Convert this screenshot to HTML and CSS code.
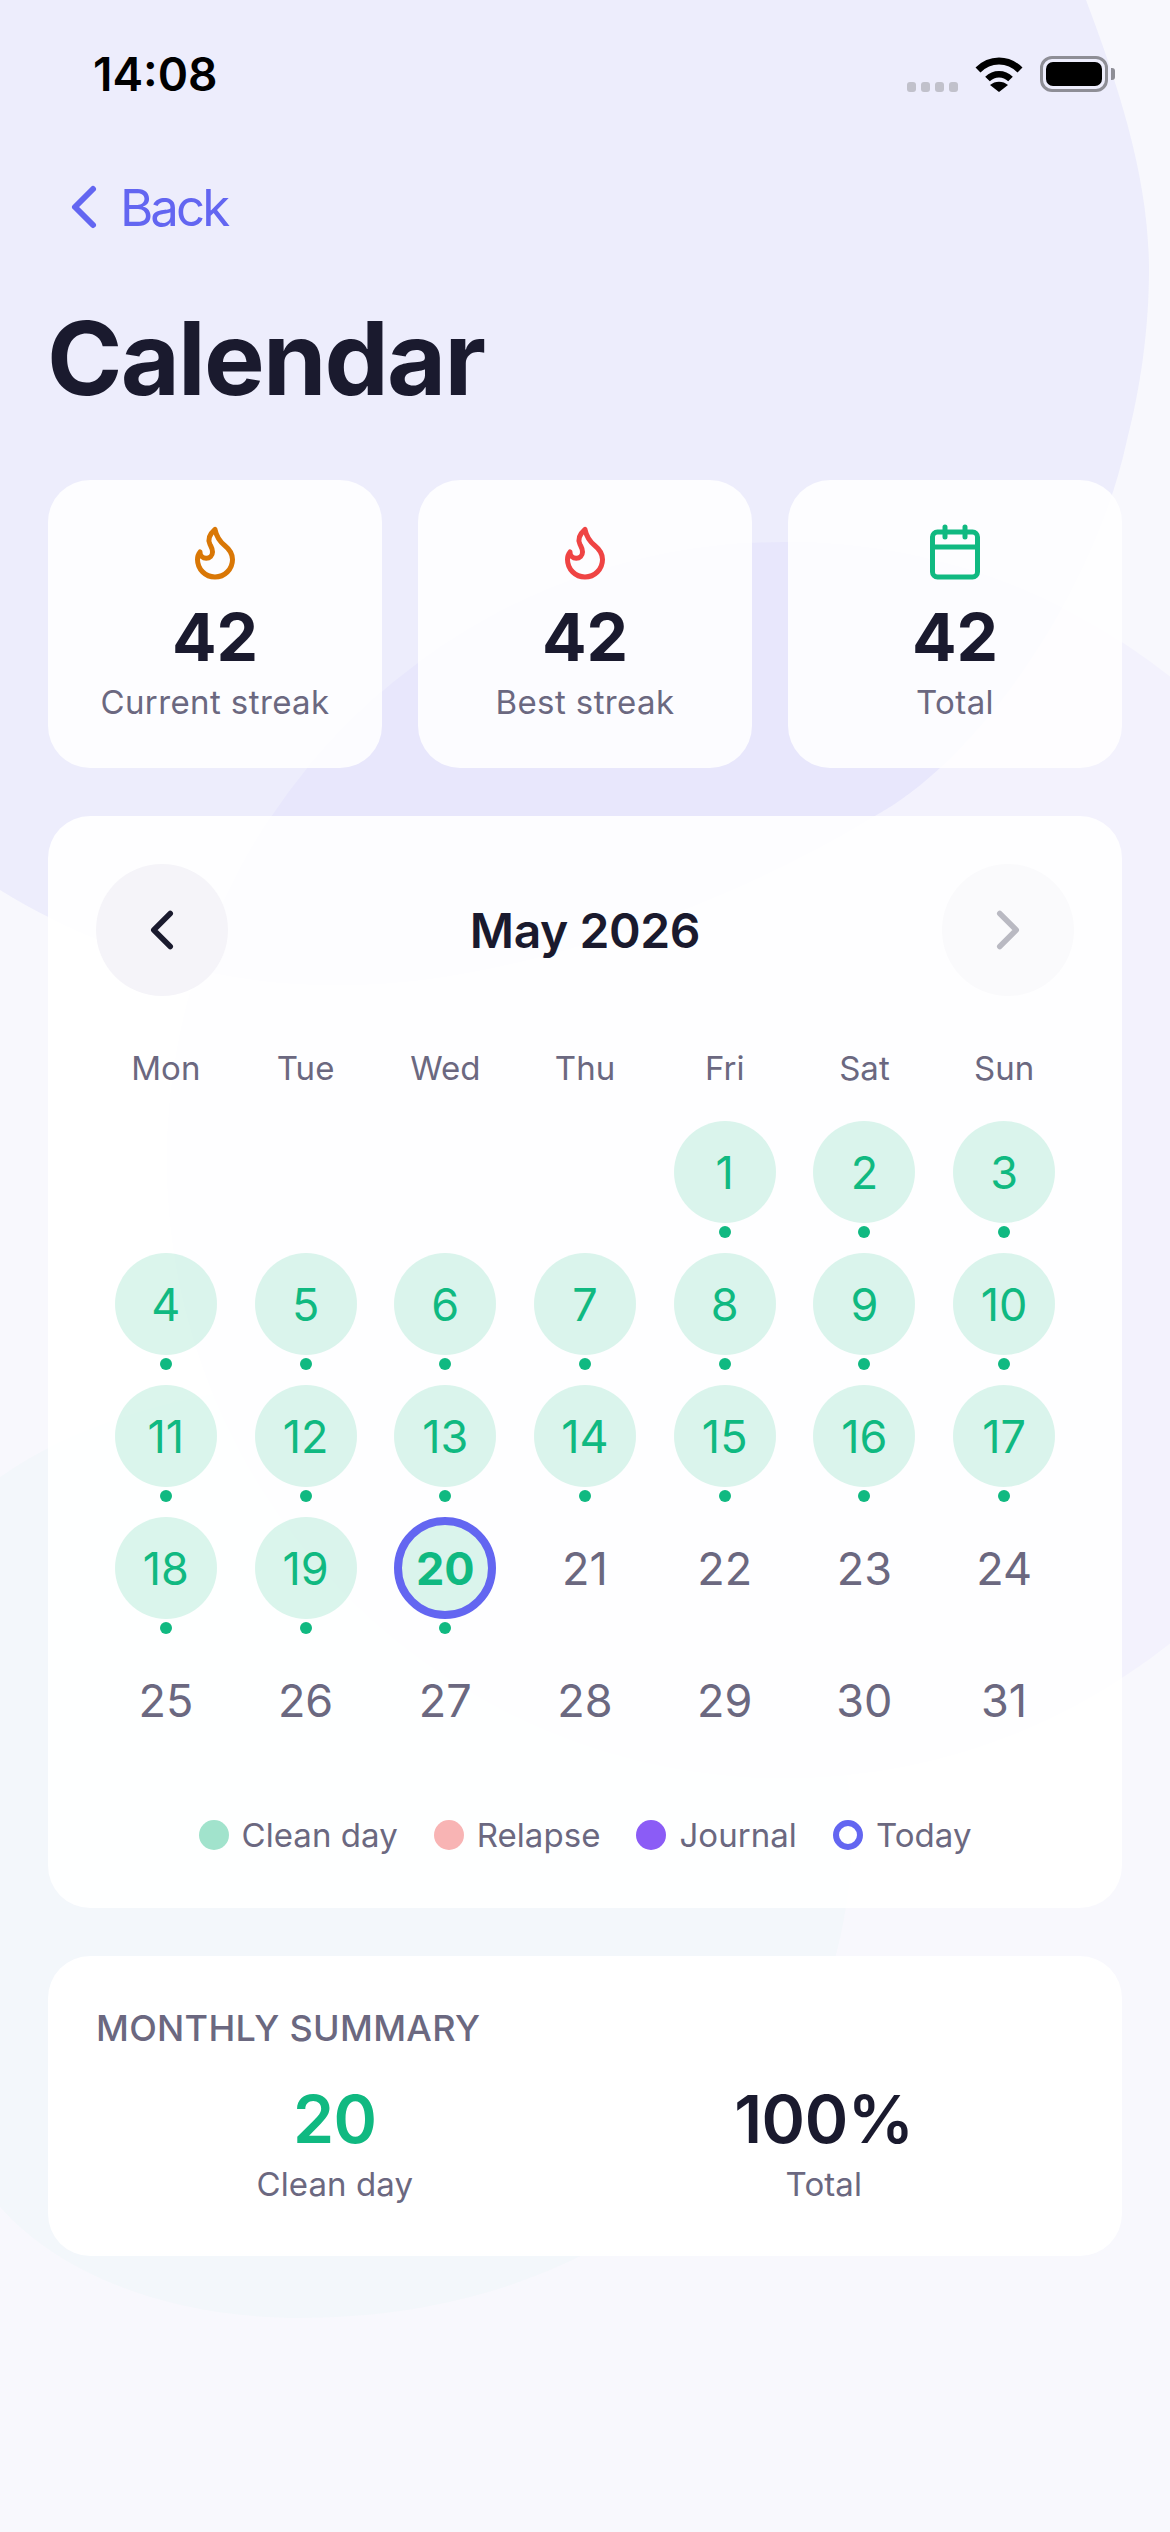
FILE: index.html
```html
<!DOCTYPE html>
<html lang="en">
<head>
  <meta charset="UTF-8" />
  <meta name="viewport" content="width=device-width, initial-scale=1" />
  <title>Calendar</title>
  <link rel="stylesheet" href="styles.css">
</head>
<body>
  <!-- BACKGROUND SHAPES -->
  <svg class="bg-shapes" viewBox="0 0 1170 2532" aria-hidden="true">
    <path class="shape-a" d="M0 0H1086C1120 90 1149 180 1149 270C1149 330 1140 390 1127 440C1095 590 980 760 873 817C730 905 500 990 330 985C200 985 80 940 0 890Z" />
    <circle class="shape-b" cx="785" cy="1160" r="618" />
    <path class="shape-c" d="M0 1477C150 1370 480 1330 680 1480C830 1600 880 1790 836 1955C790 2140 600 2318 300 2318C170 2318 60 2275 0 2207Z" />
  </svg>

  <div class="page">
    <!-- STATUS BAR -->
    <div class="status-bar">
      <span class="time">14:08</span>
      <div class="status-icons">
        <div class="signal"><i></i><i></i><i></i><i></i></div>
        <svg class="wifi" viewBox="0 0 48 37">
          <path d="M3 15C15 3 33 3 45 15" fill="none" stroke="#000" stroke-width="7" />
          <path d="M12.5 24C19 17.5 29 17.5 35.500 24" fill="none" stroke="#000" stroke-width="6.500" />
          <path d="M15 30C20 25.500 28 25.500 33 30L24 37Z" />
        </svg>
        <div class="battery"><div class="battery-fill"></div></div>
        <div class="battery-nub"></div>
      </div>
    </div>

    <div class="back">
      <svg class="back-icon" viewBox="0 0 24 24"><path d="M15 18l-6-6 6-6" /></svg>
      <span>Back</span>
    </div>

    <h1>Calendar</h1>

    <!-- STATS -->
    <div class="stats">
      <div class="stat-card">
        <svg class="stat-icon orange" viewBox="0 0 24 24"><path d="M8.5 14.5A2.5 2.5 0 0 0 11 12c0-1.38-.5-2-1-3-1.072-2.143-.224-4.054 2-6 .5 2.5 2 4.900 4 6.500 2 1.600 3 3.500 3 5.500a7 7 0 1 1-14 0c0-1.153.433-2.294 1-3a2.500 2.500 0 0 0 2.500 2.500z" /></svg>
        <div class="stat-value">42</div>
        <div class="stat-label">Current streak</div>
      </div>
      <div class="stat-card">
        <svg class="stat-icon red" viewBox="0 0 24 24"><path d="M8.5 14.5A2.5 2.5 0 0 0 11 12c0-1.38-.5-2-1-3-1.072-2.143-.224-4.054 2-6 .5 2.5 2 4.900 4 6.500 2 1.600 3 3.500 3 5.500a7 7 0 1 1-14 0c0-1.153.433-2.294 1-3a2.500 2.500 0 0 0 2.500 2.500z" /></svg>
        <div class="stat-value">42</div>
        <div class="stat-label">Best streak</div>
      </div>
      <div class="stat-card">
        <svg class="stat-icon green" viewBox="0 0 24 24"><rect x="3" y="4" width="18" height="18" rx="2" /><path d="M16 2v4M8 2v4M3 10h18" /></svg>
        <div class="stat-value">42</div>
        <div class="stat-label">Total</div>
      </div>
    </div>

    <!-- CALENDAR -->
    <div class="card calendar">
      <div class="month-nav">
        <div class="nav-btn"><svg viewBox="0 0 24 24"><path d="M15 18l-6-6 6-6" /></svg></div>
        <div class="month-title">May 2026</div>
        <div class="nav-btn disabled"><svg viewBox="0 0 24 24"><path d="M9 18l6-6-6-6" /></svg></div>
      </div>

      <div class="weekdays">
        <span>Mon</span><span>Tue</span><span>Wed</span><span>Thu</span><span>Fri</span><span>Sat</span><span>Sun</span>
      </div>

      <div class="days">
        <div class="day"></div><div class="day"></div><div class="day"></div><div class="day"></div>
        <div class="day clean"><b>1</b><i></i></div>
        <div class="day clean"><b>2</b><i></i></div>
        <div class="day clean"><b>3</b><i></i></div>
        <div class="day clean"><b>4</b><i></i></div>
        <div class="day clean"><b>5</b><i></i></div>
        <div class="day clean"><b>6</b><i></i></div>
        <div class="day clean"><b>7</b><i></i></div>
        <div class="day clean"><b>8</b><i></i></div>
        <div class="day clean"><b>9</b><i></i></div>
        <div class="day clean"><b>10</b><i></i></div>
        <div class="day clean"><b>11</b><i></i></div>
        <div class="day clean"><b>12</b><i></i></div>
        <div class="day clean"><b>13</b><i></i></div>
        <div class="day clean"><b>14</b><i></i></div>
        <div class="day clean"><b>15</b><i></i></div>
        <div class="day clean"><b>16</b><i></i></div>
        <div class="day clean"><b>17</b><i></i></div>
        <div class="day clean"><b>18</b><i></i></div>
        <div class="day clean"><b>19</b><i></i></div>
        <div class="day clean today"><b>20</b><i></i></div>
        <div class="day"><b>21</b></div>
        <div class="day"><b>22</b></div>
        <div class="day"><b>23</b></div>
        <div class="day"><b>24</b></div>
        <div class="day"><b>25</b></div>
        <div class="day"><b>26</b></div>
        <div class="day"><b>27</b></div>
        <div class="day"><b>28</b></div>
        <div class="day"><b>29</b></div>
        <div class="day"><b>30</b></div>
        <div class="day"><b>31</b></div>
      </div>

      <div class="legend">
        <div class="legend-item"><i class="swatch swatch-clean"></i>Clean day</div>
        <div class="legend-item"><i class="swatch swatch-relapse"></i>Relapse</div>
        <div class="legend-item"><i class="swatch swatch-journal"></i>Journal</div>
        <div class="legend-item"><i class="swatch swatch-today"></i>Today</div>
      </div>
    </div>

    <!-- SUMMARY -->
    <div class="card summary">
      <div class="summary-title">MONTHLY SUMMARY</div>
      <div class="summary-row">
        <div class="summary-item">
          <div class="summary-value good">20</div>
          <div class="summary-label">Clean day</div>
        </div>
        <div class="summary-item">
          <div class="summary-value">100%</div>
          <div class="summary-label">Total</div>
        </div>
      </div>
    </div>
  </div>
</body>
</html>
```

FILE: styles.css
```css
* {
  box-sizing: border-box;
}

html, body {
  margin: 0;
  height: 2532px;
  overflow: hidden;
}

body {
  position: relative;
  background: #f8f8fd;
  color: #1a1a2e;
  font-family: Inter, "Liberation Sans", sans-serif;
}

/* Background */
.bg-shapes {
  position: absolute;
  top: 0;
  left: 0;
  width: 1170px;
  height: 2532px;
}

.shape-a {
  fill: rgba(99, 102, 241, 0.07);
}

.shape-b {
  fill: rgba(139, 92, 246, 0.04);
}

.shape-c {
  fill: rgba(16, 185, 129, 0.02);
}

.page {
  position: relative;
  padding: 0 48px;
}

/* Status bar */
.status-bar {
  display: flex;
  justify-content: space-between;
  align-items: flex-start;
  height: 171px;
  padding: 51px 0 0 45px;
}

.time {
  font-size: 46px;
  font-weight: 600;
  line-height: 46px;
  color: #000;
}

.status-icons {
  display: flex;
  align-items: flex-end;
  margin-top: 4px;
  margin-right: 7px;
}

.signal {
  display: flex;
  gap: 5px;
  margin-right: 17px;
}

.signal i {
  width: 9px;
  height: 10px;
  border-radius: 3px;
  background: #c1c1cb;
}

.wifi {
  width: 48px;
  height: 37px;
  margin-right: 17px;
}

.battery {
  width: 68px;
  height: 36px;
  padding: 3px;
  border: 3px solid #8e8e96;
  border-radius: 12px;
}

.battery-fill {
  width: 100%;
  height: 100%;
  background: #000;
  border-radius: 7px;
}

.battery-nub {
  width: 4px;
  height: 12px;
  margin: 0 0 12px 3px;
  border-radius: 0 3px 3px 0;
  background: #8e8e96;
}

/* Header */
.back {
  display: flex;
  align-items: center;
  height: 72px;
  color: #6366f1;
  font-size: 51px;
  font-weight: 400;
  letter-spacing: -3px;
}

.back-icon {
  width: 72px;
  height: 72px;
  fill: none;
  stroke: #6366f1;
  stroke-width: 2;
  stroke-linecap: round;
  stroke-linejoin: round;
}

h1 {
  margin: 53px 0 0 -1px;
  font-size: 102px;
  line-height: 124px;
  font-weight: 700;
  letter-spacing: -1.8px;
}

/* Stats */
.stats {
  display: grid;
  grid-template-columns: repeat(3, 1fr);
  gap: 36px;
  margin-top: 60px;
}

.stat-card {
  display: flex;
  flex-direction: column;
  align-items: center;
  height: 288px;
  padding-top: 42px;
  background: rgba(255, 255, 255, 0.85);
  border-radius: 42px;
}

.stat-icon {
  width: 60px;
  height: 60px;
  fill: none;
  stroke-width: 2;
  stroke-linecap: round;
  stroke-linejoin: round;
}

.stat-icon.orange {
  stroke: #d97706;
}

.stat-icon.red {
  stroke: #ef4444;
}

.stat-icon.green {
  stroke: #10b981;
}

.stat-value {
  margin-top: 15px;
  font-size: 66px;
  line-height: 80px;
  font-weight: 700;
}

.stat-label {
  margin-top: 4px;
  font-size: 33px;
  line-height: 42px;
  letter-spacing: 0.4px;
  color: #6b6880;
}

/* Calendar card */
.card {
  background: rgba(255, 255, 255, 0.9);
  border-radius: 42px;
}

.calendar {
  margin-top: 48px;
  height: 1092px;
  padding: 48px;
}

.month-nav {
  display: flex;
  justify-content: space-between;
  align-items: center;
}

.nav-btn {
  display: flex;
  align-items: center;
  justify-content: center;
  width: 132px;
  height: 132px;
  border-radius: 50%;
  background: #f5f4f9;
}

.nav-btn svg {
  width: 66px;
  height: 66px;
  fill: none;
  stroke: #1a1a2e;
  stroke-width: 2;
  stroke-linecap: round;
  stroke-linejoin: round;
}

.nav-btn.disabled {
  background: #fafafc;
}

.nav-btn.disabled svg {
  stroke: #b9b9c2;
}

.month-title {
  font-size: 48px;
  font-weight: 600;
  letter-spacing: -0.4px;
}

.weekdays {
  display: grid;
  grid-template-columns: repeat(7, 1fr);
  margin-top: 48px;
  text-align: center;
  font-size: 33px;
  line-height: 48px;
  color: #6b6880;
}

.days {
  display: grid;
  grid-template-columns: repeat(7, 1fr);
  grid-auto-rows: 132px;
  margin-top: 29px;
}

.day {
  display: flex;
  flex-direction: column;
  align-items: center;
}

.day b {
  display: flex;
  align-items: center;
  justify-content: center;
  width: 102px;
  height: 102px;
  border-radius: 50%;
  font-size: 45px;
  font-weight: 400;
  color: #6b6880;
}

.day i {
  width: 12px;
  height: 12px;
  margin-top: 3px;
  border-radius: 50%;
  background: #10b981;
}

.day.clean b {
  background: rgba(16, 185, 129, 0.15);
  color: #10b981;
}

.day.today b {
  border: 8px solid #6366f1;
  font-weight: 700;
}

.legend {
  display: flex;
  justify-content: center;
  gap: 36px;
  margin-top: 33px;
}

.legend-item {
  display: flex;
  align-items: center;
  gap: 13px;
  font-size: 33px;
  line-height: 42px;
  letter-spacing: 0.05px;
  color: #6b6880;
}

.swatch {
  width: 30px;
  height: 30px;
  border-radius: 50%;
}

.swatch-clean {
  background: #a1e3cc;
}

.swatch-relapse {
  background: #f8b4b4;
}

.swatch-journal {
  background: #8b5cf6;
}

.swatch-today {
  border: 6px solid #6366f1;
}

/* Summary */
.summary {
  margin-top: 48px;
  height: 300px;
  padding: 50px 48px 0;
  background: rgba(255, 255, 255, 0.95);
}

.summary-title {
  font-size: 36px;
  line-height: 44px;
  font-weight: 500;
  letter-spacing: 0.3px;
  color: #6b6880;
}

.summary-row {
  display: flex;
  justify-content: space-around;
  margin-top: 29px;
}

.summary-item {
  text-align: center;
}

.summary-value {
  font-size: 66px;
  line-height: 80px;
  font-weight: 600;
  letter-spacing: -0.5px;
}

.summary-value.good {
  color: #10b981;
}

.summary-label {
  margin-top: 4px;
  font-size: 33px;
  line-height: 42px;
  letter-spacing: 0.1px;
  color: #6b6880;
}
```
